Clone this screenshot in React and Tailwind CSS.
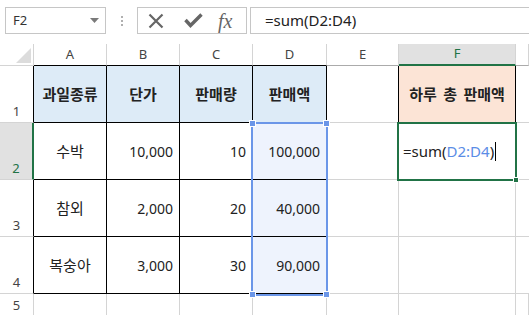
import React from "react";

const num = { fontFamily: '"Noto Sans", "Open Sans", sans-serif' };
const kr = { fontFamily: '"Noto Sans CJK KR", "Noto Sans", sans-serif' };

const cols = ["A", "B", "C", "D", "E", "F", "G"];

const Cell = ({ className = "", children, style }) => (
  <div className={`flex items-center ${className}`} style={style}>
    {children}
  </div>
);

const Handle = ({ className }) => (
  <div className={`absolute w-[7px] h-[7px] bg-[#6b96e8] border border-white ${className}`} />
);

export default function App() {
  const rows = [
    { n: 2, name: "수박", price: "10,000", qty: "10", total: "100,000" },
    { n: 3, name: "참외", price: "2,000", qty: "20", total: "40,000" },
    { n: 4, name: "복숭아", price: "3,000", qty: "30", total: "90,000" },
  ];

  return (
    <div className="relative w-[529px] h-[315px] overflow-hidden bg-white text-[#222]">
      {/* formula bar */}
      <div className="flex items-start h-[44px] pt-[7px]">
        <div className="ml-[5px] w-[101px] h-[27px] border border-[#c6c6c6] flex items-center justify-between pl-[7px] pr-[6px]">
          <span className="text-[13px] text-[#333]" style={num}>F2</span>
          <svg width="9" height="5" viewBox="0 0 9 5">
            <path d="M0 0h9L4.5 5z" fill="#7a7a7a" />
          </svg>
        </div>
        <div className="w-[31px] h-[27px] flex flex-col items-center justify-center gap-[2px]">
          <span className="w-[2px] h-[2px] bg-[#b0b0b0]" />
          <span className="w-[2px] h-[2px] bg-[#b0b0b0]" />
          <span className="w-[2px] h-[2px] bg-[#b0b0b0]" />
        </div>
        <div className="w-[110px] h-[27px] border border-[#c6c6c6] flex items-center pl-[10px]">
          <svg width="16" height="16" viewBox="0 0 16 16">
            <path d="M1.5 1.5l13 13M14.5 1.5l-13 13" stroke="#666" strokeWidth="2.2" />
          </svg>
          <svg className="ml-[20px]" width="19" height="15" viewBox="0 0 19 15">
            <path d="M1.5 7l5 5.5 11-11" stroke="#666" strokeWidth="3.4" fill="none" />
          </svg>
          <span
            className="ml-[15px] text-[20px] italic text-[#666] leading-none"
            style={{ fontFamily: '"Liberation Serif", "DejaVu Serif", serif' }}
          >
            fx
          </span>
        </div>
        <div className="ml-[3px] flex-1 h-[27px] border border-r-0 border-[#c6c6c6] flex items-center pl-[14px]">
          <span className="text-[15px] text-[#222]" style={num}>=sum(D2:D4)</span>
        </div>
      </div>

      {/* sheet grid */}
      <div className="grid grid-cols-[34px_73px_73px_73px_74px_72px_117px_1fr] grid-rows-[22px_57px_57px_57px_57px_21px] text-[14px]">
        {/* column headers */}
        <div className="border-r border-b border-[#d4d4d4] flex items-end justify-end pr-[2px] pb-[2px]">
          <svg width="15" height="15" viewBox="0 0 15 15">
            <path d="M15 0V15H0z" fill="#dcdcdc" />
          </svg>
        </div>
        {cols.map((c) => {
          let cls = "border-r border-[#d4d4d4] border-b border-b-[#ababab] bg-white text-[#444]";
          if (c === "F") cls = "border-r border-[#d4d4d4] border-b-2 border-b-[#217346] bg-[#e1e1e1] text-[#217346]";
          else if (["A", "B", "C", "D"].includes(c))
            cls = "border-r border-[#d4d4d4] border-b border-b-black bg-white text-[#444]";
          return (
            <Cell key={c} className={`justify-center text-[13px] ${cls}`} style={num}>
              {c === "G" ? "" : c}
            </Cell>
          );
        })}

        {/* row 1 */}
        <div className="border-r border-r-black border-b border-b-[#d4d4d4] flex items-end justify-center pb-[1px] text-[13px] text-[#444]" style={num}>
          1
        </div>
        {["과일종류", "단가", "판매량", "판매액"].map((t) => (
          <Cell key={t} className="justify-center font-bold text-[15px] bg-[#ddebf7] border-r border-b border-black" style={kr}>
            {t}
          </Cell>
        ))}
        <Cell className="border-r border-r-black border-b border-b-[#d4d4d4]" />
        <Cell className="justify-center font-bold text-[15px] bg-[#fce4d6] border-r border-b border-black [word-spacing:3px]" style={kr}>
          하루 총 판매액
        </Cell>
        <Cell className="border-b border-[#d4d4d4]" />

        {/* data rows */}
        {rows.map((r) => (
          <React.Fragment key={r.n}>
            <div
              className={`flex items-end justify-center pb-[1px] text-[13px] border-b border-b-[#d4d4d4] ${
                r.n === 2
                  ? "bg-[#e1e1e1] text-[#217346] border-r-2 border-r-[#217346]"
                  : "text-[#444] border-r border-r-black"
              }`}
              style={num}
            >
              {r.n}
            </div>
            <Cell className="justify-center text-[15px] border-r border-b border-black" style={kr}>
              {r.name}
            </Cell>
            <Cell className="justify-end pr-[6px] border-r border-b border-black" style={num}>
              {r.price}
            </Cell>
            <Cell className="justify-end pr-[6px] border-r border-b border-black" style={num}>
              {r.qty}
            </Cell>
            <Cell className="justify-end pr-[6px] bg-[#eef3fd] border-r border-b border-black" style={num}>
              {r.total}
            </Cell>
            <Cell className="border-r border-b border-[#d4d4d4]" />
            <Cell className="border-r border-b border-[#d4d4d4] pl-[4px]">
              {r.n === 2 && (
                <span className="text-[15px] flex items-center" style={num}>
                  =sum(<span className="text-[#5b8de6]">D2:D4</span>)
                  <span className="ml-[1px] w-[1px] h-[19px] bg-black" />
                </span>
              )}
            </Cell>
            <Cell className="border-b border-[#d4d4d4]" />
          </React.Fragment>
        ))}

        {/* row 5 */}
        <div className="flex items-start justify-center pt-[3px] text-[13px] leading-[16px] text-[#444] border-r border-[#d4d4d4]" style={num}>
          5
        </div>
        {cols.map((c) => (
          <Cell key={c} className="border-r border-[#d4d4d4]" />
        ))}
      </div>

      {/* D2:D4 selection */}
      <div className="absolute left-[251px] top-[122px] w-[77px] h-[174px] border-2 border-[#6b96e8]" />
      <Handle className="left-[249px] top-[120px]" />
      <Handle className="left-[323px] top-[120px]" />
      <Handle className="left-[249px] top-[291px]" />
      <Handle className="left-[323px] top-[291px]" />

      {/* F2 active cell */}
      <div className="absolute left-[397px] top-[122px] w-[120px] h-[59px] border-2 border-[#217346]" />
      <div className="absolute left-[513px] top-[177px] w-[6px] h-[6px] bg-[#217346] border border-white" />
    </div>
  );
}
